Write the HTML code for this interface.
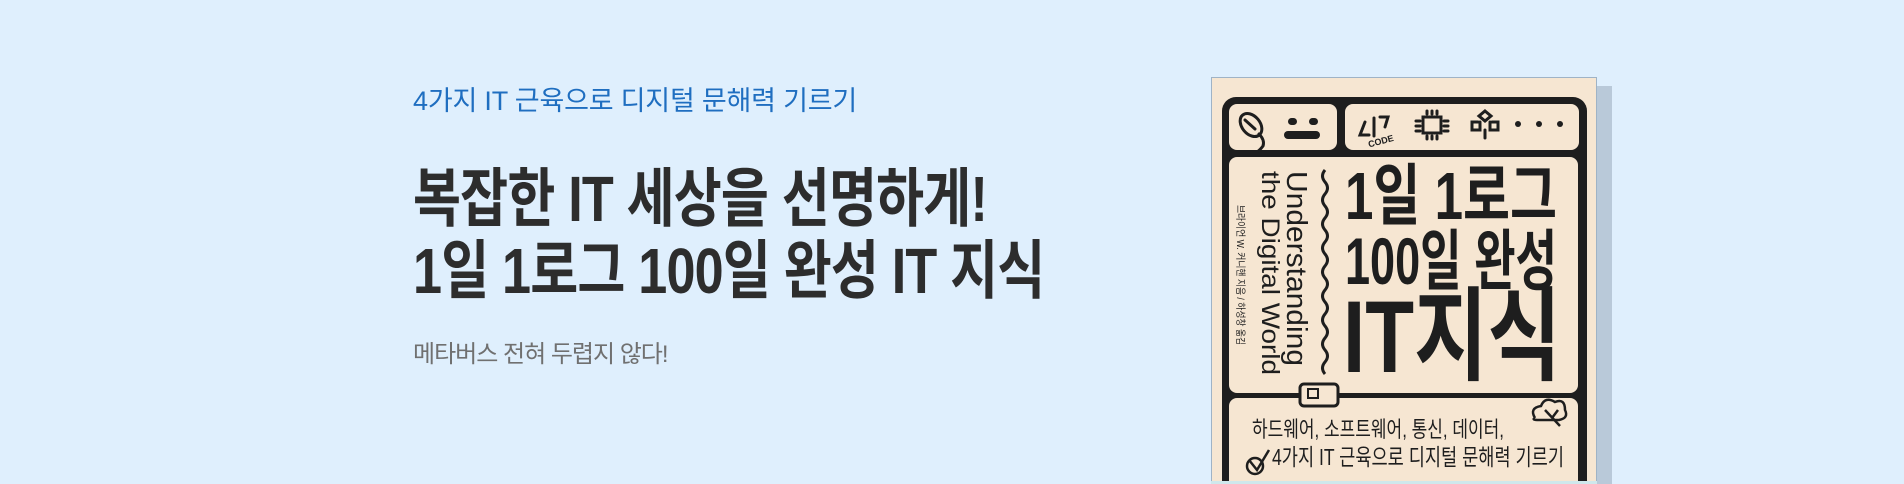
<!DOCTYPE html>
<html><head><meta charset="utf-8"><style>
html,body{margin:0;padding:0}
body{width:1904px;height:484px;background:#dfeffd;position:relative;overflow:hidden;font-family:"Liberation Sans","Noto Sans CJK KR",sans-serif}
.t{position:absolute;white-space:nowrap}
.sub{left:413px;top:79px;font-size:27px;color:#1f6ec0;letter-spacing:-0.2px}
.h{left:413px;font-size:64px;font-weight:bold;color:#2d2d2d;transform-origin:0 0;transform:scaleX(0.815);letter-spacing:-1px}
.g{left:413px;top:334px;font-size:24px;color:#707070;letter-spacing:-1px}
</style></head><body>
<div class="t sub">4가지 IT 근육으로 디지털 문해력 기르기</div>
<div class="t h" style="top:148px">복잡한 IT 세상을 선명하게!</div>
<div class="t h" style="top:220px">1일 1로그 100일 완성 IT 지식</div>
<div class="t g">메타버스 전혀 두렵지 않다!</div>
<svg width="1904" height="484" style="position:absolute;left:0;top:0" font-family="Liberation Sans, Noto Sans CJK KR, sans-serif">
<rect x="1226" y="86" width="386" height="400" fill="#b9c9d9"/>
<rect x="1211.5" y="77.5" width="385" height="410" fill="#f6e6d2" stroke="#9fb3c6"/>
<rect x="1222" y="97" width="365" height="400" rx="14" fill="#1e1e1e"/>
<rect x="1229" y="104" width="108" height="46" rx="8" fill="#f6e6d2"/>
<rect x="1345" y="104" width="234" height="46" rx="8" fill="#f6e6d2"/>
<rect x="1229" y="157" width="349" height="236" rx="8" fill="#f6e6d2"/>
<rect x="1229" y="398" width="349" height="100" rx="8" fill="#f6e6d2"/>
<g stroke="#1e1e1e" stroke-width="3" fill="none" stroke-linecap="round">
<ellipse cx="1251" cy="125" rx="9" ry="13" transform="rotate(-40 1251 125)"/>
<path d="M1245 120 l10 9"/>
<path d="M1259 134 q6 6 4 12 q-3 4 -6 6"/>
<path d="M1365 122 l-5 13 l9 0 M1374 118 l0 18 M1380 117 l8 0 l-3 10"/>
<rect x="1423" y="117" width="18" height="16"/>
<path d="M1420 121 h-4 M1420 126 h-4 M1420 131 h-4 M1444 121h4 M1444 126h4 M1444 131h4 M1427 114v-3 M1432 114v-3 M1437 114v-3 M1427 136v3 M1432 136v3 M1437 136v3"/>
<path d="M1485 111 l6 5 l-6 5 l-6 -5z M1478 122h-6v8h8v-8 M1492 122h6v8h-8v-8 M1485 130v8"/>
</g>
<rect x="1288" y="118" width="9" height="7" rx="3.5" fill="#1e1e1e"/>
<rect x="1309" y="118" width="9" height="7" rx="3.5" fill="#1e1e1e"/>
<rect x="1284" y="131" width="36" height="8" rx="4" fill="#1e1e1e"/>
<text x="1368" y="145" font-size="9" font-weight="bold" fill="#1e1e1e" transform="rotate(-15 1378 142)">CODE</text>
<circle cx="1518" cy="124" r="3" fill="#1e1e1e"/><circle cx="1539" cy="124" r="3" fill="#1e1e1e"/><circle cx="1560" cy="124" r="3" fill="#1e1e1e"/>
<g fill="#1e1e1e" font-weight="bold">
<text x="1345" y="219" font-size="67" textLength="212" lengthAdjust="spacingAndGlyphs">1일 1로그</text>
<text x="1345" y="284" font-size="66" textLength="212" lengthAdjust="spacingAndGlyphs">100일 완성</text>
<text x="1343" y="372" font-size="102" textLength="218" lengthAdjust="spacingAndGlyphs">IT지식</text>
<text transform="translate(1287 171) rotate(90)" font-size="29" font-weight="normal" textLength="195" lengthAdjust="spacingAndGlyphs">Understanding</text>
<text transform="translate(1262 171) rotate(90)" font-size="25" font-weight="normal" textLength="204" lengthAdjust="spacingAndGlyphs">the Digital World</text>
<text transform="translate(1237 205) rotate(90)" font-size="10" font-weight="normal" textLength="140" lengthAdjust="spacingAndGlyphs">브라이언 W. 커니핸 지음 / 하성창 옮김</text>
</g>
<path d="M1325 170 q-5 6 0 12 q5 6 0 12 q-5 6 0 12 q5 6 0 12 q-5 6 0 12 q5 6 0 12 q-5 6 0 12 q5 6 0 12 q-5 6 0 12 q5 6 0 12 q-5 6 0 12 q5 6 0 12 q-5 6 0 12 q5 6 0 12 q-5 6 0 12 q5 6 0 12 q-5 6 0 12" stroke="#1e1e1e" stroke-width="3" fill="none"/>
<rect x="1300" y="384" width="38" height="22" rx="4" fill="#f6e6d2" stroke="#1e1e1e" stroke-width="3"/>
<rect x="1308" y="389" width="10" height="9" fill="none" stroke="#1e1e1e" stroke-width="2"/>
<g fill="#1e1e1e">
<text x="1252" y="437" font-size="22" textLength="252" lengthAdjust="spacingAndGlyphs">하드웨어, 소프트웨어, 통신, 데이터,</text>
<text x="1272" y="465" font-size="23" textLength="292" lengthAdjust="spacingAndGlyphs">4가지 IT 근육으로 디지털 문해력 기르기</text>
</g>
<g stroke="#1e1e1e" stroke-width="2.5" fill="none">
<circle cx="1255" cy="466" r="8"/><path d="M1249 460 l8 10 l12 -20"/>
<path d="M1535 418 q-6 -10 6 -12 q4 -10 14 -4 q10 -4 10 8 q4 8 -6 10 h-20 q-8 0 -4 -2" />
<path d="M1545 410 l15 16 M1552 418 l6 -8"/>
</g>
<rect x="1211" y="481" width="386" height="3" fill="#cfe8ec"/>
</svg>
</body></html>
